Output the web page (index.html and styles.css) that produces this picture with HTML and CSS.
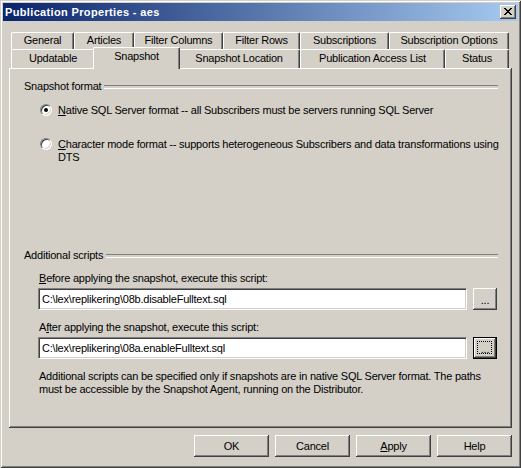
FILE: index.html
```html
<!DOCTYPE html>
<html>
<head>
<meta charset="utf-8">
<title>Publication Properties - aes</title>
<link rel="stylesheet" href="styles.css">
</head>
<body>
<div class="window">
  <div class="titlebar">
    <span class="title">Publication Properties - aes</span>
    <span class="close">
      <svg class="xglyph" width="8" height="7" viewBox="0 0 8 7" shape-rendering="crispEdges"><path fill="#000" d="M0 0h2v1H0z M6 0h2v1H6z M1 1h2v1H1z M5 1h2v1H5z M2 2h4v1H2z M3 3h2v1H3z M2 4h4v1H2z M1 5h2v1H1z M5 5h2v1H5z M0 6h2v1H0z M6 6h2v1H6z"/></svg>
    </span>
  </div>
  <div class="client">
    <div class="tabs">
      <div class="tabrow back">
        <div class="tab w-general">General</div>
        <div class="tab w-articles">Articles</div>
        <div class="tab w-fcols">Filter Columns</div>
        <div class="tab w-frows">Filter Rows</div>
        <div class="tab w-subs">Subscriptions</div>
        <div class="tab w-subopts">Subscription Options</div>
      </div>
      <div class="tabrow front">
        <div class="tab w-upd">Updatable</div>
        <div class="tab w-snap selected">Snapshot</div>
        <div class="tab w-snaploc">Snapshot Location</div>
        <div class="tab w-pal">Publication Access List</div>
        <div class="tab w-status">Status</div>
      </div>
    </div>
    <div class="panel">
      <div class="legend">Snapshot format</div>
      <div class="radio first">
        <span class="rb checked"></span>
        <span class="rtext"><u>N</u>ative SQL Server format -- all Subscribers must be servers running SQL Server</span>
      </div>
      <div class="radio second">
        <span class="rb"></span>
        <span class="rtext nowrap"><u>C</u>haracter mode format -- supports heterogeneous Subscribers and data transformations using<br>DTS</span>
      </div>
      <div class="legend scripts">Additional scripts</div>
      <div class="field-label"><u>B</u>efore applying the snapshot, execute this script:</div>
      <div class="field-row">
        <div class="textbox">C:\lex\replikering\08b.disableFulltext.sql</div>
        <div class="btn browse">...</div>
      </div>
      <div class="field-label">A<u>f</u>ter applying the snapshot, execute this script:</div>
      <div class="field-row">
        <div class="textbox">C:\lex\replikering\08a.enableFulltext.sql</div>
        <div class="btn browse focused">...</div>
      </div>
      <p class="note">Additional scripts can be specified only if snapshots are in native SQL Server format. The paths must be accessible by the Snapshot Agent, running on the Distributor.</p>
    </div>
    <div class="buttons">
      <div class="btn dlg">OK</div>
      <div class="btn dlg">Cancel</div>
      <div class="btn dlg"><span><u>A</u>pply</span></div>
      <div class="btn dlg">Help</div>
    </div>
  </div>
</div>
</body>
</html>
```
FILE: styles.css
```css
* { box-sizing: border-box; }
html, body { margin: 0; padding: 0; }
body {
  width: 521px;
  height: 468px;
  background: #D4D0C8;
  font-family: "Liberation Sans", Arial, sans-serif;
  font-size: 11px;
  line-height: 13px;
  letter-spacing: -0.22px;
  color: #000;
}
u { text-decoration: underline; text-underline-offset: 1px; }

.window {
  width: 521px;
  height: 468px;
  padding: 3px;
  background: #D4D0C8;
  box-shadow: inset 1px 1px #D4D0C8, inset -1px -1px #404040, inset 2px 2px #FFFFFF, inset -2px -2px #808080;
  display: flex;
  flex-direction: column;
}

.titlebar {
  height: 18px;
  flex: none;
  background: linear-gradient(to right, #0A246A, #A6CAF0);
  display: flex;
  align-items: center;
  justify-content: space-between;
  padding: 0 2px 0 2px;
}
.title {
  color: #FFFFFF;
  font-weight: bold;
  font-size: 11px;
  letter-spacing: 0.35px;
  white-space: nowrap;
}
.close {
  width: 16px;
  height: 14px;
  background: #D4D0C8;
  box-shadow: inset -1px -1px #404040, inset 1px 1px #FFFFFF, inset -2px -2px #808080;
  display: flex;
  align-items: center;
  justify-content: center;
  padding: 0 1px 1px 0;
}
.xglyph { display: block; }

.client {
  flex: 1;
  padding: 11px 6px 8px 6px;
  display: flex;
  flex-direction: column;
}

.tabs {
  flex: none;
  padding-left: 2px;
  height: 36px;
}
.tabrow { display: flex; }
.tabrow.back { height: 17px; }
.tabrow.front { height: 19px; }

.tab {
  flex: none;
  background: #D4D0C8;
  border-top: 1px solid #FFFFFF;
  border-left: 1px solid #FFFFFF;
  border-right: 1px solid #404040;
  border-radius: 2px 2px 0 0;
  box-shadow: inset -1px 0 #808080;
  text-align: center;
  white-space: nowrap;
  padding-top: 1px;
}
.tabrow.back .tab { height: 17px; }
.tabrow.front .tab { height: 19px; padding-top: 2px; }
.tabrow.front .tab.selected {
  position: relative;
  z-index: 2;
  height: 22px;
  margin: -2px -2px 0 -2px;
  padding-top: 2px;
}

.w-general { width: 63px; }
.w-articles { width: 60px; }
.w-fcols { width: 89px; }
.w-frows { width: 77px; }
.w-subs { width: 89px; }
.w-subopts { width: 120px; }
.w-upd { width: 84px; }
.w-snap { width: 87px; }
.w-snaploc { width: 122px; }
.w-pal { width: 145px; }
.w-status { width: 64px; }

.panel {
  flex: none;
  height: 360px;
  padding: 12px 14px 0 15px;
  box-shadow: inset -1px -1px #404040, inset 1px 1px #FFFFFF, inset -2px -2px #808080;
  display: flex;
  flex-direction: column;
}

.legend {
  display: flex;
  align-items: center;
  height: 13px;
  white-space: nowrap;
}
.legend::after {
  content: "";
  flex: 1;
  height: 2px;
  margin-left: 3px;
  margin-top: 1px;
  border-top: 1px solid #808080;
  border-bottom: 1px solid #FFFFFF;
}
.legend.scripts { margin-top: 85px; }

.radio {
  display: flex;
  align-items: flex-start;
  padding-left: 16px;
}
.radio.first { margin-top: 11px; }
.radio.second { margin-top: 21px; }
.rtext { margin-left: 6px; }
.rtext.nowrap { white-space: nowrap; }

.rb {
  flex: none;
  position: relative;
  width: 12px;
  height: 12px;
  border-radius: 50%;
  background: #FFFFFF;
  border: 1px solid;
  border-color: #808080 #FFFFFF #FFFFFF #808080;
  box-shadow: inset 1px 1px #404040, inset -1px -1px #D4D0C8;
}
.rb.checked::after {
  content: "";
  position: absolute;
  left: 3px;
  top: 3px;
  width: 4px;
  height: 4px;
  border-radius: 50%;
  background: #000;
}

.field-label {
  margin-top: 10px;
  padding-left: 15px;
  white-space: nowrap;
}
.field-row {
  display: flex;
  gap: 6px;
  margin-top: 3px;
  padding-left: 14px;
}
.field-row + .field-label { margin-top: 11px; }

.textbox {
  width: 429px;
  height: 22px;
  background: #FFFFFF;
  border: 1px solid;
  border-color: #808080 #FFFFFF #FFFFFF #808080;
  box-shadow: inset 1px 1px #404040, inset -1px -1px #D4D0C8;
  padding: 0 3px;
  line-height: 20px;
  white-space: nowrap;
  overflow: hidden;
}

.btn {
  position: relative;
  background: #D4D0C8;
  box-shadow: inset -1px -1px #404040, inset 1px 1px #FFFFFF, inset -2px -2px #808080;
  display: flex;
  align-items: center;
  justify-content: center;
  white-space: nowrap;
}
.browse {
  width: 24px;
  height: 22px;
  padding-top: 2px;
}
.browse.focused {
  border: 1px solid #000;
}
.browse.focused::before {
  content: "";
  position: absolute;
  left: 3px;
  top: 3px;
  right: 4px;
  bottom: 4px;
  border: 1px dotted #000;
}

.note {
  margin: 11px 0 0 0;
  padding-left: 15px;
  padding-right: 8px;
}

.buttons {
  flex: none;
  display: flex;
  justify-content: flex-end;
  gap: 6px;
  margin-top: 7px;
}
.dlg {
  width: 75px;
  height: 22px;
}
```
